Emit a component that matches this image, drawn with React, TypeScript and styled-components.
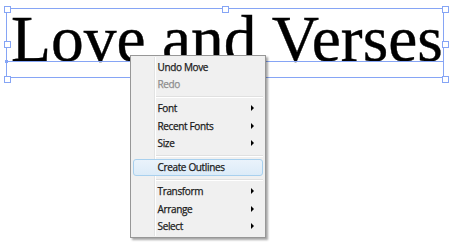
import React from 'react';
import styled, { createGlobalStyle } from 'styled-components';

const GlobalStyle = createGlobalStyle`
  html, body {
    margin: 0;
    padding: 0;
    background: #ffffff;
  }
`;

const Canvas = styled.div`
  position: relative;
  width: 450px;
  height: 245px;
  overflow: hidden;
  background: #ffffff;
`;

// selected text frame on the artboard
const SelectionBox = styled.div`
  position: absolute;
  left: 6px;
  top: 8px;
  width: 438px;
  height: 70px;
  border: 1px solid #86a5f5;
  box-sizing: border-box;
`;

const Baseline = styled.div`
  position: absolute;
  left: 0;
  right: 0;
  top: 52px;
  height: 1px;
  background: #86a5f5;
`;

const Headline = styled.div`
  position: absolute;
  left: 4px;
  top: -7px;
  font-family: 'Liberation Serif', 'Times New Roman', serif;
  font-size: 65.5px;
  line-height: 74px;
  color: #000000;
  white-space: nowrap;
  -webkit-text-stroke: 0.4px #000000;
`;

const Handle = styled.div<{ $x: number; $y: number }>`
  position: absolute;
  left: ${({ $x }) => $x - 3}px;
  top: ${({ $y }) => $y - 3}px;
  width: 5px;
  height: 5px;
  border: 1px solid #86a5f5;
  background: #ffffff;
`;

const AnchorDot = styled.div`
  position: absolute;
  left: -2px;
  top: 51px;
  width: 3px;
  height: 3px;
  background: #86a5f5;
`;

const Menu = styled.div`
  position: absolute;
  left: 130px;
  top: 55px;
  width: 136px;
  height: 183px;
  box-sizing: border-box;
  padding: 2px 2px;
  background: #f0f0f0;
  border: 1px solid #979797;
  box-shadow: 2px 2px 2px rgba(0, 0, 0, 0.35);
  font-family: 'Open Sans', 'Noto Sans', sans-serif;
  font-size: 10px;
  letter-spacing: -0.35px;
  display: flex;
  flex-direction: column;

  &::before {
    content: '';
    position: absolute;
    left: 23px;
    top: 1px;
    bottom: 1px;
    width: 1px;
    background: #e2e3e3;
    box-shadow: 1px 0 0 #ffffff;
  }
`;

const Item = styled.div<{ $disabled?: boolean; $active?: boolean }>`
  position: relative;
  height: 17.5px;
  display: flex;
  align-items: center;
  padding-left: 23.5px;
  padding-right: 8px;
  box-sizing: border-box;
  color: ${({ $disabled }) => ($disabled ? '#8d8d8d' : '#1a1a1a')};
  -webkit-text-stroke: 0.25px ${({ $disabled }) => ($disabled ? '#8d8d8d' : '#1a1a1a')};
  border-radius: 3px;
  border: 1px solid ${({ $active }) => ($active ? '#a8d0ee' : 'transparent')};
  background: ${({ $active }) =>
    $active ? 'linear-gradient(to bottom, #eaf3fb 0%, #dcebf8 100%)' : 'transparent'};
  z-index: 1;
`;

const Label = styled.span`
  flex: 1;
  white-space: nowrap;
`;

const Arrow = styled.span`
  width: 0;
  height: 0;
  border-top: 3px solid transparent;
  border-bottom: 3px solid transparent;
  border-left: 3px solid #000000;
`;

const Separator = styled.div<{ $h: number }>`
  position: relative;
  height: ${({ $h }) => $h}px;
  display: flex;
  align-items: center;
  padding-left: 23px;

  &::after {
    content: '';
    flex: 1;
    height: 1px;
    background: #e0e0e0;
    box-shadow: 0 1px 0 #ffffff;
  }
`;

type Entry =
  | { kind: 'item'; label: string; sub?: boolean; disabled?: boolean; active?: boolean }
  | { kind: 'sep'; h: number };

const entries: Entry[] = [
  { kind: 'item', label: 'Undo Move' },
  { kind: 'item', label: 'Redo', disabled: true },
  { kind: 'sep', h: 6.5 },
  { kind: 'item', label: 'Font', sub: true },
  { kind: 'item', label: 'Recent Fonts', sub: true },
  { kind: 'item', label: 'Size', sub: true },
  { kind: 'sep', h: 6.5 },
  { kind: 'item', label: 'Create Outlines', active: true },
  { kind: 'sep', h: 6.5 },
  { kind: 'item', label: 'Transform', sub: true },
  { kind: 'item', label: 'Arrange', sub: true },
  { kind: 'item', label: 'Select', sub: true },
];

const handles = [
  [0, 0], [218, 0], [438, 0],
  [0, 35], [438, 35],
  [0, 70], [218, 70], [438, 70],
];

const App: React.FC = () => (
  <>
    <GlobalStyle />
    <Canvas>
      <SelectionBox>
        <Headline>Love and Verses</Headline>
        <Baseline />
        <AnchorDot />
        {handles.map(([x, y], i) => (
          <Handle key={i} $x={x} $y={y} />
        ))}
      </SelectionBox>
      <Menu>
        {entries.map((e, i) =>
          e.kind === 'sep' ? (
            <Separator key={i} $h={e.h} />
          ) : (
            <Item key={i} $disabled={e.disabled} $active={e.active}>
              <Label>{e.label}</Label>
              {e.sub && <Arrow />}
            </Item>
          )
        )}
      </Menu>
    </Canvas>
  </>
);

export default App;
